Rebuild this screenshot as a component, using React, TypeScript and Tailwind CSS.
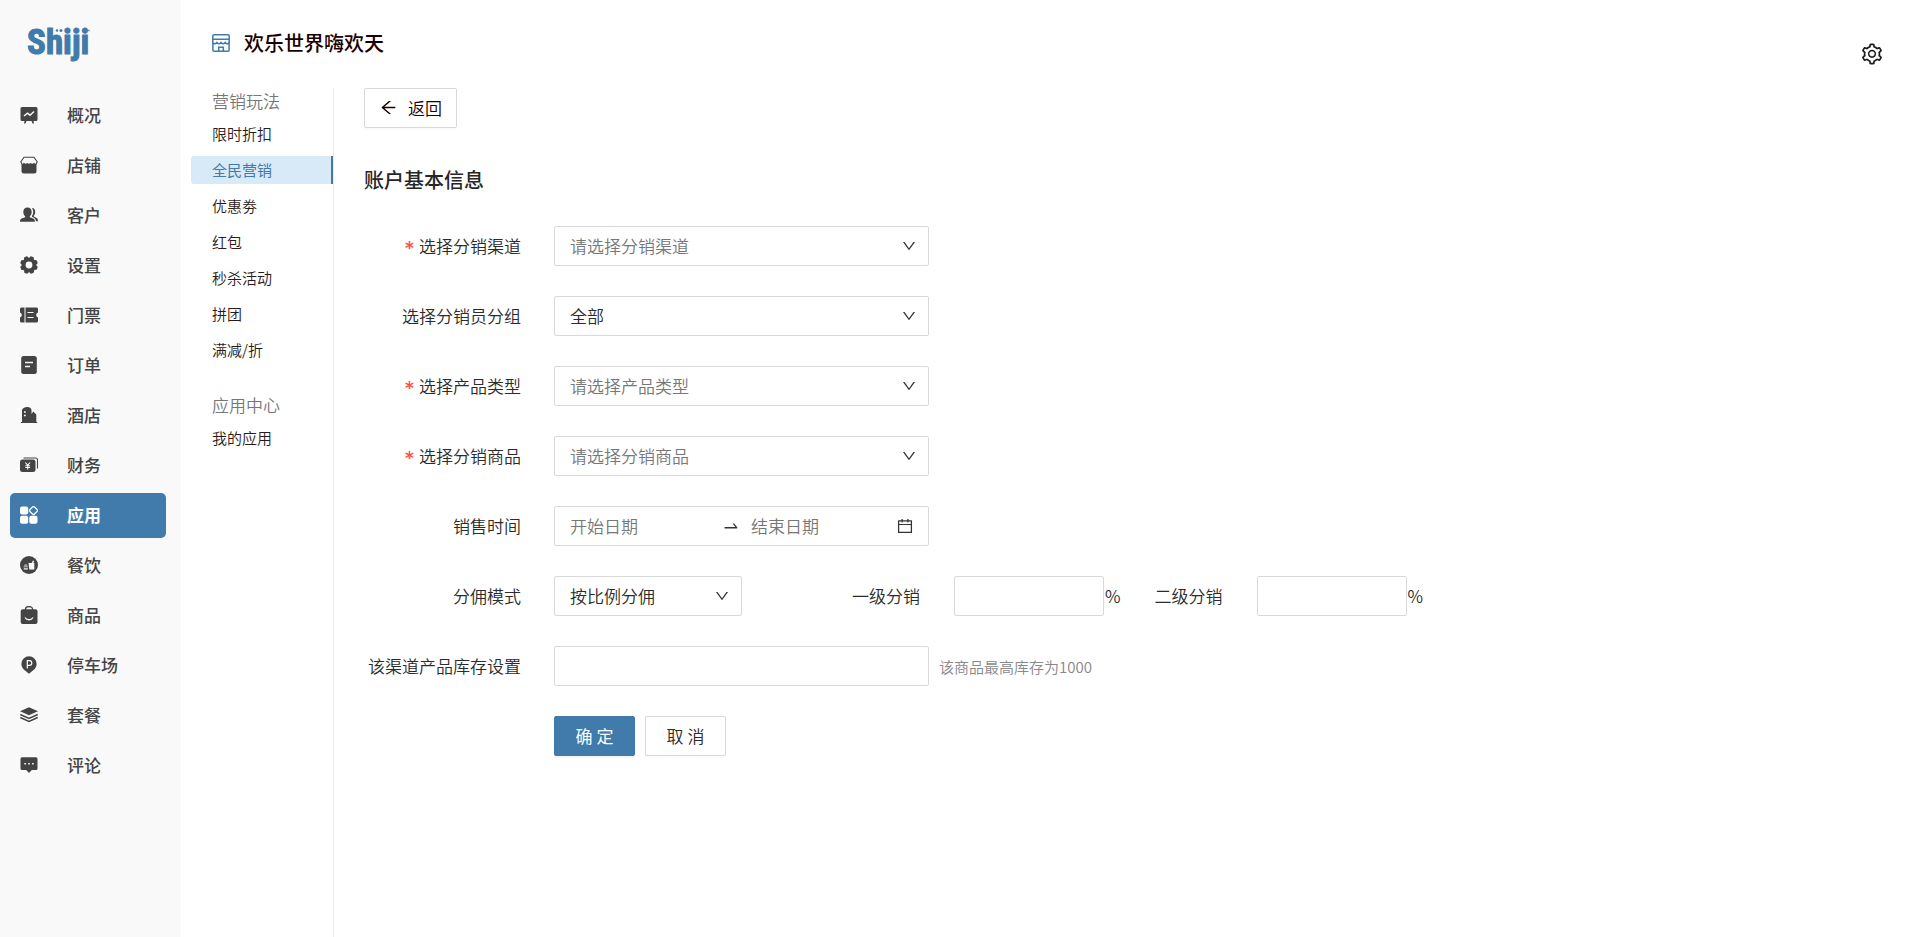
import React, { useId } from "react";
import {
  AiOutlineArrowLeft,
  AiOutlineCalendar,
  AiOutlineDown,
  AiOutlineSetting,
  AiOutlineSwapRight,
} from "react-icons/ai";

const gearLobes = [0, 45, 90, 135, 180, 225, 270, 315];

const navIcons: Record<string, React.ReactNode> = {
  overview: (
    <>
      <path d="M2 1h14a1.500 1.500 0 0 1 1.500 1.500v11a1.500 1.500 0 0 1-1.500 1.500h-14a1.500 1.500 0 0 1-1.500-1.500v-11a1.500 1.500 0 0 1 1.500-1.500zM4.500 15h2l-1 2.500h-1.500zM11.500 15h2l.5 2.500h-1.500z" />
      <path d="M4 10l3.500-2.800 2.500 2 4-3.700" fill="none" stroke="#f9f9f9" strokeWidth="1.500" />
    </>
  ),
  shop: (
    <>
      <path d="M4 1.200h10l3.200 4.600-1.200 2.500H2L.8 5.800z" fill="none" stroke="currentColor" strokeWidth="1.100" />
      <path d="M1.500 8q1.500.6 2.500-1.300 1.800 2.200 3.400.4 1.600 2 3.200 0 1.600 1.800 3.400-.4 1 1.900 2.500 1.300v7a2.500 2.500 0 0 1-2.500 2.500h-10a2.500 2.500 0 0 1-2.500-2.500z" />
    </>
  ),
  customer: (
    <>
      <path d="M7.500 1.500c2.800 0 4.200 1.800 4.200 4.500 0 1.800-.8 3.400-1.900 4.300v1l3.400 1.300c1.300.6 1.700 1.500 1.700 3.200H0c0-1.700.4-2.600 1.700-3.200l3.500-1.300v-1C4 9.400 3.300 7.800 3.300 6c0-2.700 1.400-4.500 4.200-4.500z" />
      <path d="M11.800 1.800c2.400.1 3.400 1.900 3.400 4.200 0 1.500-.5 2.800-1.400 3.600v.8l2.800 1.500c1.100.6 1.400 1.500 1.400 3.400h-2.100c-.1-1.800-.6-2.700-2-3.500l-2-1v-.8c1-1.200 1.300-2.500 1.300-4 0-1.600-.5-3.100-1.400-4.200z" />
    </>
  ),
  settings: (
    <>
      <circle cx="9" cy="9" r="5.500" fill="none" stroke="currentColor" strokeWidth="4.200" />
      {gearLobes.map((angle) => (
        <rect key={angle} x="6.900" y="0.100" width="4.200" height="3" rx="1.300" transform={`rotate(${angle + 22} 9 9)`} />
      ))}
    </>
  ),
  ticket: (
    <>
      <path d="M1.500 1.500h3v15h-3a1.500 1.500 0 0 1-1.500-1.500v-3.500a2.600 2.600 0 0 0 0-5v-3.500a1.500 1.500 0 0 1 1.500-1.500zM5.500 1.500h11a1.500 1.500 0 0 1 1.500 1.500v3.500a2.600 2.600 0 0 0 0 5v3.500a1.500 1.500 0 0 1-1.500 1.500h-11z" />
      <path d="M7.500 6.500h6M7.500 11.500h6" stroke="#f9f9f9" strokeWidth="1.200" />
    </>
  ),
  order: (
    <>
      <rect x="1.200" y="0" width="15.600" height="18" rx="2.500" />
      <path d="M5 6.500h8M5 10.500h5" stroke="#f9f9f9" strokeWidth="1.300" />
    </>
  ),
  hotel: (
    <>
      <path d="M1 16h1V4c0-1.500 3-3 5.500-3S11.500 2.500 11.500 4v4l1.800-2.500 3 3V16h1v1H.6z" />
      <path d="M4 6h1.800M4 9.500h1.800" stroke="#f9f9f9" strokeWidth="1.500" />
    </>
  ),
  finance: (
    <>
      <path d="M3.500 2h12a2 2 0 0 1 2 2v8.500" fill="none" stroke="currentColor" strokeWidth="1.100" />
      <rect x="0" y="3.500" width="15.500" height="12.500" rx="2.500" />
      <path d="M5.300 6.500l2.400 2.700 2.400-2.700M5.300 9.700h4.800M5.300 11.500h4.800M7.700 9v4.500" fill="none" stroke="#f9f9f9" strokeWidth="1.100" />
    </>
  ),
  apps: (
    <>
      <rect x="0" y="0.500" width="8.200" height="8" rx="2" />
      <rect x="0" y="9.700" width="8.200" height="8" rx="2" />
      <rect x="9.300" y="9.700" width="8.200" height="8" rx="2" />
      <path d="M12.500 1q1-1 2 0l2.500 2.500q1 1 0 2l-2.500 2.500q-1 1-2 0l-2.500-2.500q-1-1 0-2z" fill="none" stroke="currentColor" strokeWidth="1.200" />
    </>
  ),
  dining: (
    <>
      <circle cx="9" cy="9" r="9" />
      <path d="M8.500 7h3.200l1.200-2.500 1.300.5-.9 2h1v6.500h-5zM3.800 12.300h4v1.300h-4zM3.800 9.500c.8-1.500 3.200-1.500 4 0zM3.500 10.500h4.300v.8h-4.300z" fill="#f9f9f9" />
    </>
  ),
  goods: (
    <>
      <path d="M5.500 4V3a3.500 2.400 0 0 1 7 0v1" fill="none" stroke="currentColor" strokeWidth="1.300" />
      <rect x="0.700" y="3.200" width="16.800" height="14.800" rx="2" />
      <path d="M5 11.500c1.800 3 6.200 3 8 0" fill="none" stroke="#f9f9f9" strokeWidth="1.300" />
    </>
  ),
  parking: (
    <>
      <path d="M9 0.300a7.600 7.600 0 0 1 7.600 7.600c0 4.300-3.300 6.100-7.600 9.900-4.300-3.800-7.600-5.600-7.600-9.900A7.600 7.600 0 0 1 9 .3z" />
      <path d="M7.300 12.500V4.700h2.200a2.200 2.200 0 0 1 0 4.600H7.300" fill="none" stroke="#f9f9f9" strokeWidth="1.200" />
    </>
  ),
  bundle: (
    <>
      <path d="M9 1.300l9 4-9 4-9-4z" />
      <path d="M.3 8.500l8.700 4 8.700-4M.3 11.500l8.700 4 8.700-4" fill="none" stroke="currentColor" strokeWidth="1.400" />
    </>
  ),
  review: (
    <>
      <path d="M2 1.300h14a1.500 1.500 0 0 1 1.500 1.500v9.700a1.500 1.500 0 0 1-1.500 1.500h-4.200l-2.800 3-2.800-3h-4.200a1.500 1.500 0 0 1-1.500-1.500v-9.700a1.500 1.500 0 0 1 1.500-1.500z" />
      <path d="M4.300 7h1.600v1.600h-1.600zM8.200 7h1.600v1.600h-1.600zM12.100 7h1.600v1.600h-1.600z" fill="#f9f9f9" />
    </>
  ),
};

const navItems = [
  { icon: "overview", label: "概况" },
  { icon: "shop", label: "店铺" },
  { icon: "customer", label: "客户" },
  { icon: "settings", label: "设置" },
  { icon: "ticket", label: "门票" },
  { icon: "order", label: "订单" },
  { icon: "hotel", label: "酒店" },
  { icon: "finance", label: "财务" },
  { icon: "apps", label: "应用", active: true },
  { icon: "dining", label: "餐饮" },
  { icon: "goods", label: "商品" },
  { icon: "parking", label: "停车场" },
  { icon: "bundle", label: "套餐" },
  { icon: "review", label: "评论" },
];

const menuGroups = [
  {
    title: "营销玩法",
    items: ["限时折扣", "全民营销", "优惠劵", "红包", "秒杀活动", "拼团", "满减/折"],
  },
  { title: "应用中心", items: ["我的应用"] },
];

function Logo() {
  return (
    <svg width="72" height="52" viewBox="0 0 72 52" fill="#407bab" role="img" aria-label="Shiji">
      <text
        x="3"
        y="36"
        fontSize="35"
        fontWeight="700"
        stroke="#407bab"
        strokeWidth="1"
        fontFamily="'Liberation Sans Narrow', 'Roboto Condensed', 'Open Sans', sans-serif"
      >
        Shiji
      </text>
      <circle cx="33" cy="12.500" r="1.200" />
      <circle cx="37" cy="12.500" r="1.500" />
      <circle cx="61.500" cy="12.500" r="1.300" />
      <circle cx="65" cy="12.500" r="0.800" />
    </svg>
  );
}

function Sidebar() {
  return (
    <aside className="w-[181px] shrink-0 bg-[#f9f9f9]">
      <a href="#" className="mt-[18px] ml-6 block h-[52px] w-[72px]">
        <Logo />
      </a>
      <nav className="mt-[23px] flex flex-col gap-[5px] pr-[15px] pl-2.5">
        {navItems.map((item) => (
          <a
            key={item.label}
            href="#"
            className={
              item.active
                ? "flex h-[45px] items-center gap-[29px] rounded-[5px] bg-[#407bab] px-2.5 pb-0.5 font-bold text-white"
                : "flex h-[45px] items-center gap-[29px] rounded-[5px] px-2.5 pb-0.5 font-medium text-[#444]"
            }
          >
            <svg width="18" height="18" viewBox="0 0 18 18" fill="currentColor" aria-hidden="true">
              {navIcons[item.icon]}
            </svg>
            {item.label}
          </a>
        ))}
      </nav>
    </aside>
  );
}

function SubMenu() {
  return (
    <nav className="w-[153px] shrink-0 border-r border-[#ebebeb] pl-2.5">
      {menuGroups.map((group) => (
        <section key={group.title} className="mb-7">
          <h2 className="pb-1.5 pl-[21px] leading-[26px] font-[350] text-[#777]">{group.title}</h2>
          <ul className="flex flex-col gap-2">
            {group.items.map((item) => (
              <li key={item}>
                <a
                  href="#"
                  className={
                    item === "全民营销"
                      ? "block h-7 rounded-l-[3px] border-r-2 border-[#407bab] bg-[#d8e9f7] pl-[21px] text-[15px] leading-7 text-[#407bab]"
                      : "block h-7 pl-[21px] text-[15px] leading-7 font-[350] text-[#2b1a1a]"
                  }
                >
                  {item}
                </a>
              </li>
            ))}
          </ul>
        </section>
      ))}
    </nav>
  );
}

function FormRow({
  label,
  htmlFor,
  required,
  children,
}: {
  label?: string;
  htmlFor?: string;
  required?: boolean;
  children: React.ReactNode;
}) {
  return (
    <div className="flex min-h-10 items-center gap-[33px]">
      <div className="flex w-[157px] shrink-0 justify-end pb-0.5">
        {label && (
          <label htmlFor={htmlFor} className="flex items-center gap-[5px]">
            {required && (
              <span className="pt-1.5 font-['DejaVu_Sans',sans-serif] text-[17px] font-bold text-[#ff4d4f]">*</span>
            )}
            {label}
          </label>
        )}
      </div>
      {children}
    </div>
  );
}

function SelectBox({
  id,
  value,
  placeholder,
  narrow,
}: {
  id: string;
  value: string;
  placeholder?: boolean;
  narrow?: boolean;
}) {
  return (
    <div className={narrow ? "relative w-[188px]" : "relative w-[375px]"}>
      <select
        id={id}
        className={
          placeholder
            ? "h-10 w-full appearance-none rounded-[2px] border border-[#d9d9d9] bg-white pr-10 pb-0.5 pl-[15px] text-[#777]"
            : "h-10 w-full appearance-none rounded-[2px] border border-[#d9d9d9] bg-white pr-10 pb-0.5 pl-[15px] text-[#2b2b2b]"
        }
      >
        <option>{value}</option>
      </select>
      <AiOutlineDown className="pointer-events-none absolute top-3 right-3 size-4 text-[#333]" />
    </div>
  );
}

function SelectRow({
  label,
  value,
  required,
  placeholder,
}: {
  label: string;
  value: string;
  required?: boolean;
  placeholder?: boolean;
}) {
  const id = useId();
  return (
    <FormRow label={label} htmlFor={id} required={required}>
      <SelectBox id={id} value={value} placeholder={placeholder} />
    </FormRow>
  );
}

function RateField({ label }: { label: string }) {
  const id = useId();
  return (
    <div className="flex items-center">
      <label htmlFor={id} className="mr-[34px] pb-0.5">
        {label}
      </label>
      <input id={id} type="text" className="h-10 w-[150px] rounded-[2px] border border-[#d9d9d9] px-[15px]" />
      <span className="ml-px pb-0.5">%</span>
    </div>
  );
}

function AccountForm() {
  return (
    <form className="mt-[37px]" onSubmit={(e) => e.preventDefault()}>
      <h2 className="mb-[31px] text-xl leading-[30px] font-medium text-[#262626]">账户基本信息</h2>
      <div className="flex flex-col gap-[30px]">
        <SelectRow label="选择分销渠道" value="请选择分销渠道" required placeholder />
        <SelectRow label="选择分销员分组" value="全部" />
        <SelectRow label="选择产品类型" value="请选择产品类型" required placeholder />
        <SelectRow label="选择分销商品" value="请选择分销商品" required placeholder />
        <FormRow label="销售时间" htmlFor="start-date">
          <div className="flex h-10 w-[375px] items-center rounded-[2px] border border-[#d9d9d9] pr-3.5 pl-[15px]">
            <input
              id="start-date"
              type="text"
              placeholder="开始日期"
              className="w-[152px] pb-0.5 placeholder:text-[#777]"
            />
            <AiOutlineSwapRight className="mr-[11px] size-[18px] shrink-0 text-[#333]" />
            <input
              type="text"
              aria-label="结束日期"
              placeholder="结束日期"
              className="min-w-0 flex-1 pb-0.5 placeholder:text-[#777]"
            />
            <AiOutlineCalendar className="size-[18px] shrink-0 text-[#333]" />
          </div>
        </FormRow>
        <FormRow label="分佣模式" htmlFor="mode">
          <div className="flex items-center">
            <SelectBox id="mode" value="按比例分佣" narrow />
            <div className="ml-[110px] flex gap-[34px]">
              <RateField label="一级分销" />
              <RateField label="二级分销" />
            </div>
          </div>
        </FormRow>
        <FormRow label="该渠道产品库存设置" htmlFor="stock">
          <div className="flex items-center gap-2.5">
            <input id="stock" type="text" className="h-10 w-[375px] rounded-[2px] border border-[#d9d9d9] px-[15px]" />
            <span className="text-[15px] text-[#888]">该商品最高库存为1000</span>
          </div>
        </FormRow>
        <FormRow>
          <div className="flex gap-2.5">
            <button
              type="submit"
              className="h-10 w-[81px] rounded-[2px] border border-[#407bab] bg-[#407bab] pb-0.5 font-normal text-white shadow-[0_2px_0_rgba(0,0,0,0.045)]"
            >
              确 定
            </button>
            <button
              type="button"
              className="h-10 w-[81px] rounded-[2px] border border-[#d9d9d9] bg-white pb-0.5 shadow-[0_2px_0_rgba(0,0,0,0.016)]"
            >
              取 消
            </button>
          </div>
        </FormRow>
      </div>
    </form>
  );
}

function StoreIcon() {
  return (
    <svg width="18" height="18" viewBox="0 0 18 18" fill="none" stroke="#407bab" strokeWidth="1.500" aria-hidden="true">
      <path d="M2 .8h14a1.200 1.200 0 0 1 1.200 1.200v3.200H.8V2A1.200 1.200 0 0 1 2 .8z" />
      <path d="M.8 5.200v3.300q2 2.500 4.100 0 2.100 2.500 4.100 0 2.100 2.500 4.100 0 2.100 2.500 4.100 0V5.200M.9 9v7.200a1 1 0 0 0 1 1h14.200a1 1 0 0 0 1-1V9M6.700 17.200v-4h4.600v4" />
    </svg>
  );
}

export default function App() {
  return (
    <div className="flex min-h-screen bg-white font-['Noto_Sans_CJK_SC',sans-serif] text-[17px] leading-[27px]">
      <Sidebar />
      <div className="flex min-w-0 flex-1 flex-col">
        <header className="flex h-[88px] shrink-0 items-start justify-between pr-9 pl-[31px]">
          <div className="flex items-center gap-3.5 pt-7">
            <StoreIcon />
            <h1 className="text-xl leading-[30px] font-medium text-[#1a0000]">欢乐世界嗨欢天</h1>
          </div>
          <button type="button" aria-label="设置" className="mt-[42px]">
            <AiOutlineSetting className="size-6 text-[#1a1a1a]" />
          </button>
        </header>
        <div className="flex flex-1">
          <SubMenu />
          <main className="min-w-0 flex-1 pl-[30px] font-[350] text-[#2b2b2b]">
            <button
              type="button"
              className="flex h-10 items-center gap-2.5 rounded-[2px] border border-[#d9d9d9] px-3.5 pb-0.5 text-[#1a0000] shadow-[0_2px_0_rgba(0,0,0,0.016)]"
            >
              <AiOutlineArrowLeft className="size-[19px]" />
              返回
            </button>
            <AccountForm />
          </main>
        </div>
      </div>
    </div>
  );
}
